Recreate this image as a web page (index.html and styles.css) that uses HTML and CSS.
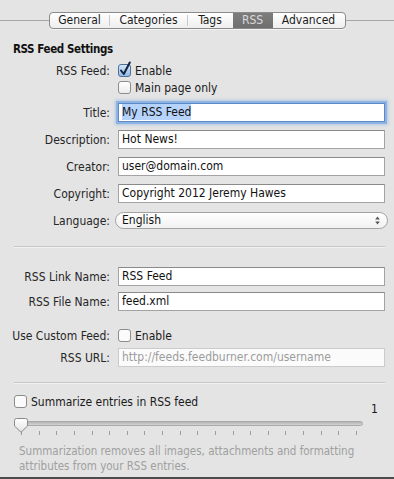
FILE: index.html
```html
<!DOCTYPE html>
<html>
<head>
<meta charset="utf-8">
<title>RSS Settings</title>
<link rel="stylesheet" href="styles.css">
</head>
<body>
<div class="panel">
  <div class="tabbar">
    <span class="rule"></span>
    <div class="seg">
      <span class="tab t-general">General</span>
      <span class="tab t-cat">Categories</span>
      <span class="tab t-tags">Tags</span>
      <span class="tab t-rss active">RSS</span>
      <span class="tab t-adv">Advanced</span>
    </div>
    <span class="rule"></span>
  </div>

  <h2 class="section-title">RSS Feed Settings</h2>

  <div class="form">
    <div class="row r-feed">
      <span class="label">RSS Feed:</span>
      <span class="check">
        <svg class="box" width="13" height="13" viewBox="0 0 13 13">
          <defs>
            <linearGradient id="cb-on" x1="0" y1="0" x2="0" y2="1">
              <stop offset="0" stop-color="#d6e8fa"/>
              <stop offset="1" stop-color="#8fb9e6"/>
            </linearGradient>
          </defs>
          <rect x="0.5" y="0.5" width="12" height="12" rx="2.5" fill="url(#cb-on)" stroke="#4d6f99"/>
          <path d="M3 6.5 L5.8 10 L11.8 -1.5" fill="none" stroke="#16233a" stroke-width="2" stroke-linecap="round" stroke-linejoin="round"/>
        </svg>
        Enable
      </span>
    </div>
    <div class="row r-main">
      <span class="label"></span>
      <span class="check">
        <svg class="box" width="13" height="13" viewBox="0 0 13 13">
          <defs>
            <linearGradient id="cb-off" x1="0" y1="0" x2="0" y2="1">
              <stop offset="0" stop-color="#ffffff"/>
              <stop offset="1" stop-color="#ececec"/>
            </linearGradient>
          </defs>
          <rect x="0.5" y="0.5" width="12" height="12" rx="2.5" fill="url(#cb-off)" stroke="#8c8c8c"/>
        </svg>
        Main page only
      </span>
    </div>
    <div class="row r-title">
      <span class="label">Title:</span>
      <div class="field focus"><span class="sel">My RSS Feed</span></div>
    </div>
    <div class="row r-std">
      <span class="label">Description:</span>
      <div class="field">Hot News!</div>
    </div>
    <div class="row r-std">
      <span class="label">Creator:</span>
      <div class="field">user@domain.com</div>
    </div>
    <div class="row r-std">
      <span class="label">Copyright:</span>
      <div class="field">Copyright 2012 Jeremy Hawes</div>
    </div>
    <div class="row r-lang">
      <span class="label">Language:</span>
      <div class="select">
        <span>English</span>
        <svg width="5" height="9" viewBox="0 0 5 9">
          <path d="M2.5 0.5 L4.8 3.5 H0.2 Z" fill="#555"/>
          <path d="M2.5 8.5 L4.8 5.5 H0.2 Z" fill="#555"/>
        </svg>
      </div>
    </div>
  </div>

  <div class="sep sep-1"></div>

  <div class="form">
    <div class="row r-link">
      <span class="label">RSS Link Name:</span>
      <div class="field">RSS Feed</div>
    </div>
    <div class="row r-file">
      <span class="label">RSS File Name:</span>
      <div class="field">feed.xml</div>
    </div>
    <div class="row r-custom">
      <span class="label">Use Custom Feed:</span>
      <span class="check">
        <svg class="box" width="13" height="13" viewBox="0 0 13 13">
          <rect x="0.5" y="0.5" width="12" height="12" rx="2.5" fill="#fbfbfb" stroke="#8c8c8c"/>
        </svg>
        Enable
      </span>
    </div>
    <div class="row r-url">
      <span class="label">RSS URL:</span>
      <div class="field disabled">http://feeds.feedburner.com/username</div>
    </div>
  </div>

  <div class="sep sep-2"></div>

  <div class="summarize">
    <span class="check">
      <svg class="box" width="13" height="13" viewBox="0 0 13 13">
        <rect x="0.5" y="0.5" width="12" height="12" rx="2.5" fill="#fbfbfb" stroke="#8c8c8c"/>
      </svg>
      Summarize entries in RSS feed
    </span>
  </div>

  <div class="slider">
    <div class="slider-main">
      <div class="track"></div>
      <div class="ticks">
        <i></i><i></i><i></i><i></i><i></i><i></i><i></i><i></i><i></i><i></i>
        <i></i><i></i><i></i><i></i><i></i><i></i><i></i><i></i><i></i><i></i>
      </div>
      <svg class="thumb" width="15" height="15" viewBox="0 0 15 15">
        <defs>
          <linearGradient id="th" x1="0" y1="0" x2="0" y2="1">
            <stop offset="0" stop-color="#ffffff"/>
            <stop offset="1" stop-color="#e2e2e2"/>
          </linearGradient>
        </defs>
        <path d="M2.5 0.5 H11.5 Q13.5 0.5 13.5 2.5 V8 L7 14.3 L0.5 8 V2.5 Q0.5 0.5 2.5 0.5 Z" fill="url(#th)" stroke="#8a8a8a"/>
      </svg>
    </div>
    <span class="value">1</span>
  </div>

  <p class="help">Summarization removes all images, attachments and formatting attributes from your RSS entries.</p>
</div>
</body>
</html>
```

FILE: styles.css
```css
html, body {
  margin: 0;
  padding: 0;
}

body {
  font-family: "DejaVu Sans Condensed", "DejaVu Sans", sans-serif;
  font-size: 12px;
  color: #1a1a1a;
  background: #e4e4e4;
}

.panel {
  width: 394px;
  height: 479px;
  box-sizing: border-box;
  background: #e4e4e4;
  border-bottom: 2px solid #4c4c4c;
  overflow: hidden;
}

/* Tab bar */
.tabbar {
  display: flex;
  align-items: center;
  padding-top: 12px;
}

.rule {
  flex: 1;
  height: 1px;
  background: #a6a6a6;
}

.seg {
  display: flex;
  height: 17px;
  box-sizing: border-box;
  border: 1px solid #8b8b8b;
  border-radius: 4px;
  background: linear-gradient(#ffffff, #eeeeee);
  overflow: hidden;
  box-shadow: 0 1px 0 rgba(255, 255, 255, 0.6);
}

.tab {
  line-height: 15px;
  text-align: center;
  color: #1c1c1c;
  position: relative;
}

.t-general { width: 60px; }
.t-cat { width: 78px; }
.t-tags { width: 45px; }
.t-rss { width: 40px; }
.t-adv { width: 72px; }

.t-general::after,
.t-cat::after {
  content: "";
  position: absolute;
  right: 0;
  top: 2px;
  bottom: 2px;
  width: 1px;
  background: #c9c9c9;
}

.tab.active {
  background: linear-gradient(#7d7d7d, #6f6f6f);
  color: #d9d9d9;
}

/* Section title */
.section-title {
  margin: 13px 0 0 13px;
  font-size: 11.5px;
  letter-spacing: -0.4px;
  line-height: 15px;
  font-weight: bold;
  color: #111;
}

/* Form */
.form {
  padding-right: 9px;
}

.row {
  display: grid;
  grid-template-columns: 110px 267px;
  column-gap: 8px;
  align-items: center;
}

.label {
  text-align: right;
  color: #262626;
  white-space: nowrap;
}

.check {
  display: flex;
  align-items: center;
  gap: 4px;
  height: 17px;
  color: #1a1a1a;
  white-space: nowrap;
}

.box {
  flex: none;
  overflow: visible;
}

.r-feed { margin-top: 5px; height: 17px; }
.r-main { height: 17px; }
.r-title { margin-top: 7px; }
.r-std { margin-top: 8px; }
.r-lang { margin-top: 9px; }
.r-link { margin-top: 19px; }
.r-file { margin-top: 6px; }
.r-custom { margin-top: 16px; height: 17px; }
.r-url { margin-top: 4px; }

.field {
  height: 19px;
  box-sizing: border-box;
  border: 1px solid #a3a3a3;
  border-top-color: #8a8a8a;
  background: #ffffff;
  padding: 0 3px;
  line-height: 17px;
  white-space: nowrap;
  overflow: hidden;
  color: #111;
}

.field.focus {
  border-color: #5d8ac6;
  box-shadow: 0 0 0 2px #8db3e4, 0 0 3px 3px rgba(120, 165, 225, 0.45);
}

.sel {
  background: #b5d3fb;
  padding: 1px 0;
}

.field.disabled {
  border-color: #cbcbcb;
  color: #9c9c9c;
  background: #fbfbfb;
}

.select {
  height: 17px;
  box-sizing: border-box;
  margin: 0 -3px;
  border: 1px solid #a2a2a2;
  border-radius: 9px;
  background: linear-gradient(#ffffff, #f1f1f1);
  display: flex;
  align-items: center;
  justify-content: space-between;
  padding: 0 7px 0 6px;
  line-height: 15px;
  color: #111;
}

/* Separators */
.sep {
  margin: 0 9px 0 14px;
  border-top: 1px solid #c6c6c6;
  border-bottom: 1px solid #f1f1f1;
}

.sep-1 { margin-top: 17px; }
.sep-2 { margin-top: 15px; }

/* Summarize */
.summarize {
  margin-top: 9px;
  padding-left: 14px;
}

/* Slider */
.slider {
  display: flex;
  align-items: flex-start;
  padding-left: 15px;
}

.slider-main {
  position: relative;
  width: 348px;
  padding-top: 11px;
}

.track {
  height: 5px;
  box-sizing: border-box;
  border-radius: 3px;
  background: linear-gradient(#b4b4b4, #d4d4d4);
  border: 1px solid #a9a9a9;
}

.ticks {
  display: flex;
  justify-content: space-between;
  margin-top: 5px;
  padding: 0 6px 0 6px;
  height: 4px;
}

.ticks i {
  width: 1px;
  height: 4px;
  background: #9d9d9d;
}

.thumb {
  position: absolute;
  left: -1px;
  top: 8px;
}

.value {
  margin-left: 8px;
  margin-top: -8px;
  line-height: 14px;
  color: #1a1a1a;
}

/* Help */
.help {
  margin: 9px 20px 0 19px;
  font-size: 11.5px;
  line-height: 15px;
  color: #9f9f9f;
}
```
